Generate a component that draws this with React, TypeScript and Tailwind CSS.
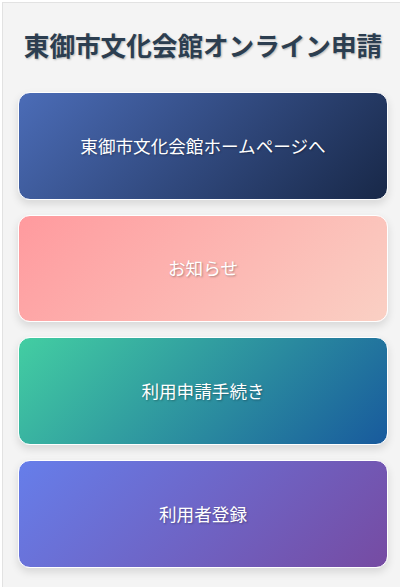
import React from "react";

const LINKS = [
  { label: "東御市文化会館ホームページへ", bg: "bg-[linear-gradient(135deg,#4b6cb7_0%,#182848_100%)]" },
  { label: "お知らせ", bg: "bg-[linear-gradient(135deg,#ff9a9e_0%,#fad0c4_100%)]" },
  { label: "利用申請手続き", bg: "bg-[linear-gradient(135deg,#43cea2_0%,#185a9d_100%)]" },
  { label: "利用者登録", bg: "bg-[linear-gradient(135deg,#667eea_0%,#764ba2_100%)]" },
] as const;

export default function App() {
  return (
    <div className="w-[400px] h-[587px] overflow-hidden bg-white font-['Noto_Sans_CJK_JP','Noto_Sans',sans-serif]">
      <div className="ml-[2px] mt-[2px] w-[401px] min-h-[590px] border-l border-t border-[#e2e2e2] bg-[#f4f4f4] px-[15px] pt-[15px]">
        {/* Header */}
        <h1 className="mt-[8px] mb-[29px] text-center text-[25.6px] leading-[37px] font-bold text-[#2c3e50] [text-shadow:1px_1px_2px_rgba(0,0,0,0.25)]">
          東御市文化会館オンライン申請
        </h1>

        {/* Menu cards */}
        <div className="flex flex-col gap-[15px]">
          {LINKS.map((link) => (
            <a
              key={link.label}
              href="#"
              className={`flex h-[107.7px] items-center justify-center rounded-[12px] border border-white text-[17.6px] text-white shadow-[0_4px_8px_rgba(0,0,0,0.12)] [text-shadow:1px_1px_2px_rgba(0,0,0,0.3)] ${link.bg}`}
            >
              {link.label}
            </a>
          ))}
        </div>
      </div>
    </div>
  );
}
